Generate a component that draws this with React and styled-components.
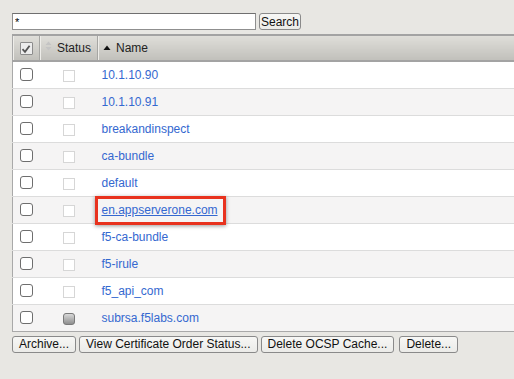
import styled, { createGlobalStyle } from 'styled-components'

const GlobalStyle = createGlobalStyle`
    html, body {
        margin: 0;
        background: #e8e7e3;
        font-family: "Liberation Sans", Arial, sans-serif;
        font-size: 12px;
        color: #222;
    }
`

const rows = [
    { name: '10.1.10.90' },
    { name: '10.1.10.91' },
    { name: 'breakandinspect' },
    { name: 'ca-bundle' },
    { name: 'default' },
    { name: 'en.appserverone.com', marked: true },
    { name: 'f5-ca-bundle' },
    { name: 'f5-irule' },
    { name: 'f5_api_com' },
    { name: 'subrsa.f5labs.com', active: true },
]

const App = () => {
    return (
        <Page>
            <GlobalStyle />
            <SearchBar>
                <SearchInput defaultValue="*" />
                <Button $tight>Search</Button>
            </SearchBar>
            <Table>
                <colgroup>
                    <col style={{ width: 27 }} />
                    <col style={{ width: 58 }} />
                    <col />
                </colgroup>
                <thead>
                    <tr>
                        <HeadCell $center>
                            <Box $checked>
                                <svg width="10" height="10" viewBox="0 0 10 10">
                                    <path d="M1.5 5.2 L4 7.8 L8.6 1.8" fill="none" stroke="#555" strokeWidth="1.8" />
                                </svg>
                            </Box>
                        </HeadCell>
                        <HeadCell>
                            <SortArrows>
                                <svg width="7" height="10" viewBox="0 0 7 10">
                                    <path d="M3.5 0.5 L6.5 4 L0.5 4 Z M0.5 6 L6.5 6 L3.5 9.5 Z" fill="#c4c4c4" />
                                </svg>
                            </SortArrows>
                            Status
                        </HeadCell>
                        <HeadCell>
                            <SortArrows>
                                <svg width="8" height="6" viewBox="0 0 8 6">
                                    <path d="M4 0.5 L7.5 5 L0.5 5 Z" fill="#111" />
                                </svg>
                            </SortArrows>
                            Name
                        </HeadCell>
                    </tr>
                </thead>
                <tbody>
                    {rows.map((row, i) => (
                        <Row key={row.name} $odd={i % 2 === 1}>
                            <Cell $center><Box /></Cell>
                            <Cell $center><Status $active={row.active} /></Cell>
                            <Cell>
                                {row.marked
                                    ? <Marked><Link $underline>{row.name}</Link></Marked>
                                    : <Link>{row.name}</Link>}
                            </Cell>
                        </Row>
                    ))}
                </tbody>
            </Table>
            <Actions>
                <Button>Archive...</Button>
                <Button>View Certificate Order Status...</Button>
                <Button>Delete OCSP Cache...</Button>
                <Button>Delete...</Button>
            </Actions>
        </Page>
    )
}

const Page = styled.div`
    padding: 13px 0 0 12px;
    height: 379px;
    box-sizing: border-box;
`

const SearchBar = styled.div`
    display: flex;
    gap: 3px;
    height: 17px;
`

const SearchInput = styled.input`
    width: 244px;
    height: 17px;
    box-sizing: border-box;
    border: 1px solid #8f8f8f;
    border-top-color: #6f6f6f;
    background: #fff;
    padding: 0 2px;
    font-family: "Liberation Sans", Arial, sans-serif;
    font-size: 11px;
    line-height: 11px;
    vertical-align: top;
    outline: none;
`

const Button = styled.button`
    height: 17px;
    box-sizing: border-box;
    padding: 0 ${p => (p.$tight ? 1 : 6)}px;
    border: 1px solid #8a8a8a;
    border-radius: 3px;
    background: linear-gradient(#f7f7f5, #ebebe8);
    font-family: "Liberation Sans", Arial, sans-serif;
    font-size: 12px;
    line-height: 14px;
    color: #111;
    white-space: nowrap;
`

const Table = styled.table`
    margin-top: 4px;
    width: 100%;
    border-collapse: collapse;
    table-layout: fixed;
    border-left: 1px solid #a9a9a9;
    border-bottom: 1px solid #a9a9a9;
`

const HeadCell = styled.th`
    height: 24px;
    padding: 0 0 0 ${p => (p.$center ? 0 : 5)}px;
    text-align: ${p => (p.$center ? 'center' : 'left')};
    font-weight: normal;
    font-size: 12px;
    color: #222;
    background: linear-gradient(#dfded9, #c1c0bb);
    border-top: 2px solid #a3a3a3;
    border-bottom: 2px solid #a3a3a3;
    border-right: 1px solid #a6a6a3;
    box-shadow: inset 1px 0 0 #eeede9;
    vertical-align: middle;
    &:last-child { border-right: none; }
`

const SortArrows = styled.span`
    display: inline-block;
    margin-right: 5px;
    vertical-align: 1px;
    svg { display: block; }
`

const Row = styled.tr`
    height: 27px;
    background: ${p => (p.$odd ? '#f5f4f4' : '#fff')};
    border-bottom: 1px solid #dcdcdc;
    &:last-child { border-bottom: none; }
`

const Cell = styled.td`
    padding: 0 0 0 ${p => (p.$center ? 0 : 4)}px;
    text-align: ${p => (p.$center ? 'center' : 'left')};
    vertical-align: middle;
    white-space: nowrap;
    overflow: visible;
`

const Box = styled.span`
    display: inline-flex;
    align-items: center;
    justify-content: center;
    width: 13px;
    height: 13px;
    box-sizing: border-box;
    border: 1px solid ${p => (p.$checked ? '#8c8c8c' : '#6e6e6e')};
    border-radius: ${p => (p.$checked ? 1 : 3)}px;
    background: ${p => (p.$checked ? '#ececec' : '#fff')};
    vertical-align: middle;
    margin-top: ${p => (p.$checked ? 0 : -2)}px;
    svg { display: block; }
`

const Status = styled.span`
    display: inline-block;
    width: 12px;
    height: 12px;
    box-sizing: border-box;
    vertical-align: middle;
    margin-top: 2px;
    margin-left: ${p => (p.$active ? 0 : 1)}px;
    border: 1px solid ${p => (p.$active ? '#7a7a7a' : '#d6d6d6')};
    border-radius: ${p => (p.$active ? 3 : 0)}px;
    background: ${p => (p.$active ? 'linear-gradient(#d8d8d8, #8e8e8e)' : '#fff')};
`

const Link = styled.a`
    color: #3468d0;
    text-decoration: ${p => (p.$underline ? 'underline' : 'none')};
    font-size: 12px;
    cursor: pointer;
`

const Marked = styled.span`
    display: inline-block;
    margin: -8px 0 -8px -7px;
    padding: 4px 5px 5px 4px;
    border: 3px solid #e8321e;
    box-shadow: 0 1px 4px rgba(0, 0, 0, 0.4);
    line-height: 14px;
`

const Actions = styled.div`
    display: flex;
    gap: 3px;
    margin-top: 4px;
    & > button:last-child { margin-left: 2px; }
`

export default App
